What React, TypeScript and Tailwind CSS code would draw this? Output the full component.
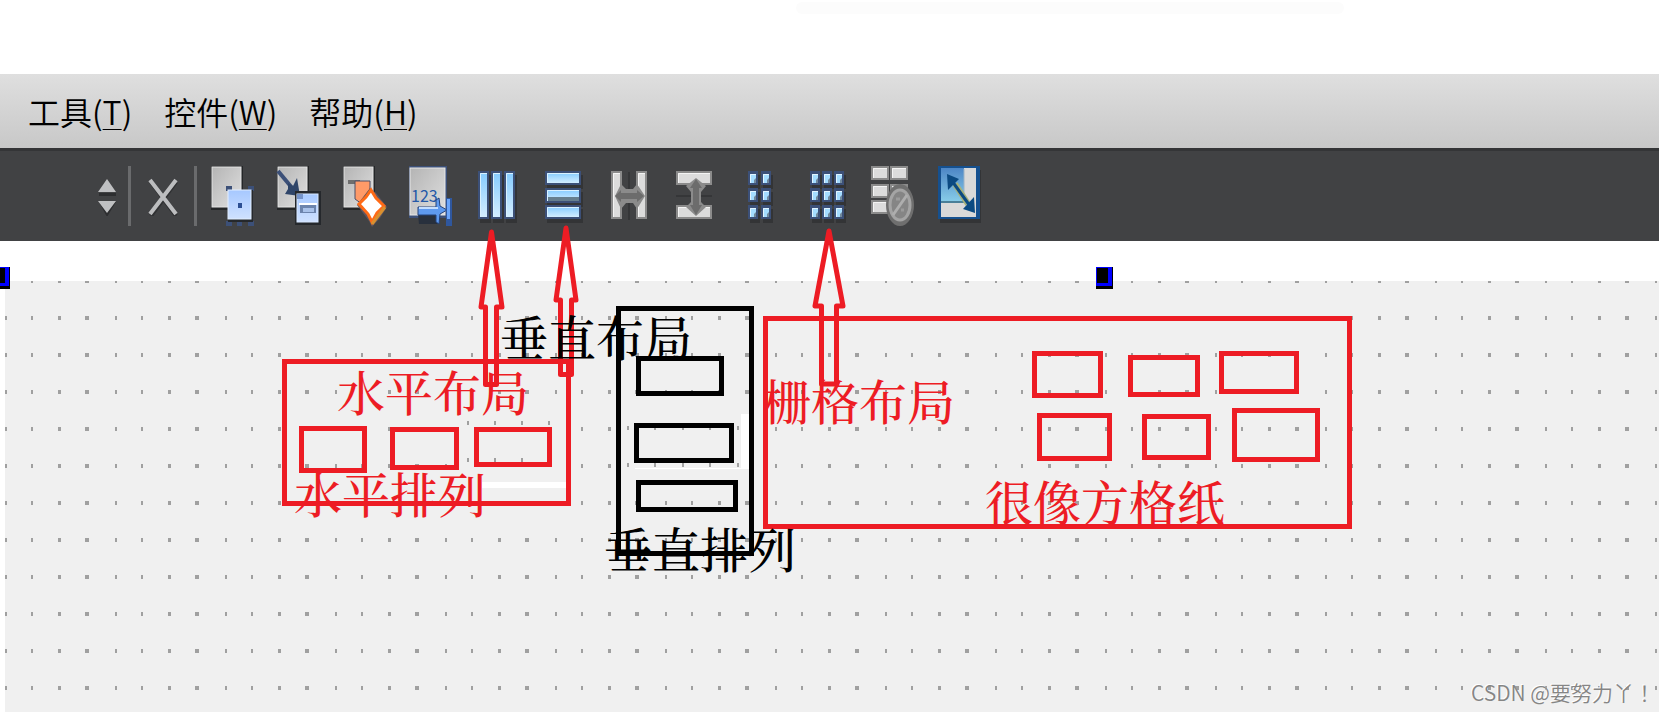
import type { ReactNode } from 'react'

type Box = { x: number; y: number; w: number; h: number; color: string }

const RED = '#ed1c24'
const BLACK = '#000000'
const NAVY = '#3c5078'

const boxes: Box[] = [
  { x: 282, y: 359, w: 289, h: 147, color: RED },
  { x: 299, y: 426, w: 68, h: 47, color: RED },
  { x: 390, y: 427, w: 69, h: 43, color: RED },
  { x: 474, y: 427, w: 78, h: 40, color: RED },
  { x: 763, y: 316, w: 589, h: 213, color: RED },
  { x: 1032, y: 351, w: 71, h: 47, color: RED },
  { x: 1128, y: 355, w: 72, h: 42, color: RED },
  { x: 1219, y: 351, w: 80, h: 43, color: RED },
  { x: 1037, y: 413, w: 75, h: 48, color: RED },
  { x: 1142, y: 414, w: 69, h: 46, color: RED },
  { x: 1232, y: 408, w: 88, h: 54, color: RED },
  { x: 616, y: 306, w: 138, h: 250, color: BLACK },
  { x: 636, y: 356, w: 88, h: 40, color: BLACK },
  { x: 634, y: 423, w: 100, h: 40, color: BLACK },
  { x: 636, y: 480, w: 102, h: 32, color: BLACK },
]

const arrows = [
  'M491.5 232 L481 307 H485.5 V384.5 H496.5 V307 H502 Z',
  'M566 228 L556 300 H560.5 V374.5 H571.5 V300 H576 Z',
  'M829 231 L815 306 H821.5 V384 H836.5 V306 H843 Z',
]

// dots of the pasted form fragments, which sit off the main grid
const strayDots = [
  [467, 421], [494, 421], [521, 421], [548, 421],
  [467, 458], [494, 458], [521, 458],
  [627, 426], [654, 426], [682, 426], [709, 426], [737, 426],
  [627, 463], [654, 463], [682, 463], [709, 463], [737, 463],
]

const menus = [
  { label: '工具', key: 'T' },
  { label: '控件', key: 'W' },
  { label: '帮助', key: 'H' },
]

function Icon({ children }: { children: ReactNode }) {
  return (
    <svg className="block h-16 w-12" viewBox="0 0 48 64" aria-hidden="true">
      {children}
    </svg>
  )
}

function Paper({ w = 32, h = 44 }: { w?: number; h?: number }) {
  return (
    <>
      <rect x="3" y="2" width={w} height={h} fill="#242628" />
      <rect x="4" y="3" width={w - 3} height={h - 4} fill="url(#paper)" stroke="#e4e4e4" />
    </>
  )
}

function Cell({ x, y, w, h }: { x: number; y: number; w: number; h: number }) {
  return (
    <>
      <rect x={x + 2} y={y + 4} width={w} height={h} fill="#333436" />
      <rect x={x} y={y} width={w} height={h} fill={NAVY} />
      <rect x={x + 2} y={y + 2} width={w - 4} height={h - 4} fill="url(#sky)" />
      <path d={`M${x + 2.5} ${y + h - 2} V${y + 2.5} H${x + w - 2}`} fill="none" stroke="#d9f1ff" />
    </>
  )
}

function SmallCell({ x, y }: { x: number; y: number }) {
  return (
    <>
      <rect x={x + 2} y={y + 4} width="10" height="14" fill="#333436" />
      <rect x={x} y={y} width="10" height="14" fill={NAVY} />
      <rect x={x + 2} y={y + 3} width="6" height="9" fill="#71899c" />
      <path d={`M${x + 2} ${y + 3} h6 v4 l-2 2 v3 h-4 z`} fill="#a4dcff" />
      <path d={`M${x + 2.5} ${y + 12} v-8.5 h5.5`} fill="none" stroke="#e2f4ff" />
    </>
  )
}

function GreyBar({ x, y, w, h }: { x: number; y: number; w: number; h: number }) {
  return (
    <>
      <rect x={x} y={y} width={w} height={h} fill="#8b8b8b" />
      <rect x={x + 2} y={y + 2} width={w - 4} height={h - 4} fill="#dcdcdc" />
      <path d={`M${x + 2.5} ${y + h - 2} V${y + 2.5} H${x + w - 2}`} fill="none" stroke="#f4f4f4" />
    </>
  )
}

const rows = [7, 24, 41]

const tools = [
  {
    name: '编辑控件',
    icon: (
      <Icon>
        <Paper />
        <path d="M18 22 h6 v5 h-6z M40 22 h6 v5 h-6z M18 57 h6 v5 h-6z M29 57 h5 v5 h-5z M40 57 h6 v5 h-6z" fill={NAVY} />
        <rect x="20" y="26" width="25" height="32" fill="#25282c" />
        <rect x="20" y="26" width="23" height="29" fill="url(#blue)" stroke="#e1eeff" />
        <rect x="30" y="39" width="4" height="5" fill="#2c4f93" />
      </Icon>
    ),
  },
  {
    name: '编辑信号/槽',
    icon: (
      <Icon>
        <Paper />
        <path d="M4 7 L19 25" stroke={NAVY} strokeWidth="4" />
        <path d="M11 30 L14 25 V19 L19 22 L23 14 L26 32 Z" fill="#2f4569" />
        <rect x="21" y="27" width="26" height="34" fill="#25282c" />
        <rect x="23" y="30" width="21" height="28" fill="url(#blue)" stroke="#d8e7ff" />
        <rect x="26" y="40" width="16" height="9" fill="#6c84ad" />
        <path d="M25 40 H43" stroke="#fff" strokeWidth="2" />
        <path d="M29 46 H40" stroke="#a9c2ea" strokeWidth="4" />
        <path d="M23 30 h6 v5 h-6z" fill="#7593c9" />
      </Icon>
    ),
  },
  {
    name: '编辑伙伴',
    icon: (
      <Icon>
        <Paper />
        <path d="M8 18 H20" stroke="#6e6e6e" strokeWidth="4" />
        <path d="M15 17 H30 V26 L22 40 L15 35 Z" fill="#ff9a68" stroke="#4c4f66" />
        <path d="M30 24 L36 29 L47 43 L40 54 L32 63 L29 57 L17 41 Z" fill="#5f5560" />
        <path d="M31 26 L36 34 L44 42 L37 49 L32 58 L28 50 L19 40 L26 33 Z" fill="#fff" stroke="#ff6a16" strokeWidth="3" />
        <path d="M45 43 L32 60" stroke="#d9902f" strokeWidth="3" />
      </Icon>
    ),
  },
  {
    name: '编辑 Tab 顺序',
    icon: (
      <Icon>
        <rect x="3" y="2" width="38" height="52" fill={NAVY} />
        <rect x="4" y="4" width="35" height="47" fill="url(#paper)" stroke="#e8e8e8" />
        <text x="5" y="38" fontSize="16" fill="#2559a8" fontFamily="Noto Sans CJK SC, sans-serif">
          123
        </text>
        <path d="M12 50 H32 V60 H13 Z" fill="#28303d" />
        <path d="M12 43 H30 V36 L33 34 L34 42 L41 46 L34 50 L33 60 L30 58 V51 H12 Z" fill="#5e9af0" stroke="#24427a" />
        <path d="M13 44 H32" stroke="#c4deff" strokeWidth="2" />
        <rect x="40" y="34" width="6" height="28" fill="#2f579e" />
        <rect x="41" y="35" width="3" height="20" fill="#6aa5fb" />
      </Icon>
    ),
  },
  {
    name: '水平布局',
    icon: (
      <Icon>
        {[6, 19, 32].map((x) => (
          <Cell key={x} x={x} y={7} w={11} h={48} />
        ))}
      </Icon>
    ),
  },
  {
    name: '垂直布局',
    icon: (
      <Icon>
        <Cell x={7} y={7} w={36} h={14} />
        <Cell x={7} y={24} w={36} h={15} />
        <Cell x={7} y={41} w={36} h={14} />
        <path d="M10 35 H41" stroke="#667f8e" strokeWidth="4" />
      </Icon>
    ),
  },
  {
    name: '使用分裂器水平布局',
    icon: (
      <Icon>
        <GreyBar x={7} y={7} w={11} h={48} />
        <GreyBar x={32} y={7} w={11} h={48} />
        <path d="M25 8 V56" stroke="#353638" strokeWidth="2" />
        <path d="M11 32 L17 20 L22 25 H29 L33 20 L41 32 L33 45 L29 39 H22 L17 45 Z" fill="#8b8b8b" />
        <path d="M11 32 L17 26 V29 H33 V26 L40 32 L33 38 V35 H17 V38 Z" fill="#6c6c6c" />
      </Icon>
    ),
  },
  {
    name: '使用分裂器垂直布局',
    icon: (
      <Icon>
        <GreyBar x={6} y={7} w={36} h={14} />
        <GreyBar x={6} y={41} w={36} h={14} />
        <path d="M6 32 H42" stroke="#353638" strokeWidth="2" />
        <path d="M26 14 L36 22 L31 28 V38 L36 43 L26 52 L16 43 L21 38 V28 L16 22 Z" fill="#8b8b8b" />
        <path d="M26 15 L32 24 H29 V41 H32 L26 51 L20 41 H23 V24 H20 Z" fill="#6c6c6c" />
      </Icon>
    ),
  },
  {
    name: '表单布局',
    icon: <Icon>{rows.flatMap((y) => [12, 25].map((x) => <SmallCell key={`${x}-${y}`} x={x} y={y} />))}</Icon>,
  },
  {
    name: '栅格布局',
    icon: <Icon>{rows.flatMap((y) => [8, 20, 32].map((x) => <SmallCell key={`${x}-${y}`} x={x} y={y} />))}</Icon>,
  },
  {
    name: '打破布局',
    icon: (
      <Icon>
        {[2, 20, 36].flatMap((y) => [3, 22].map((x) => <GreyBar key={`${x}-${y}`} x={x} y={y} w={18} h={14} />))}
        <ellipse cx="32" cy="41" rx="14" ry="21" fill="#6f6f6f" />
        <ellipse cx="32" cy="41" rx="10" ry="15" fill="#858585" stroke="#a4a4a4" strokeWidth="3" />
        <path d="M25 51 L39 31" stroke="#aeaeae" strokeWidth="3" />
        <path d="M28 35 H32 M33 46 H36" stroke="#9b9b9b" strokeWidth="3" />
      </Icon>
    ),
  },
  {
    name: '调整大小',
    icon: (
      <Icon>
        <rect x="6" y="6" width="41" height="53" fill="#333436" />
        <rect x="4" y="2" width="42" height="53" fill="#15508f" />
        <rect x="7" y="4" width="35" height="49" fill="#d9d9d9" />
        <path d="M7 4 H30 V37 H7 Z" fill="url(#deep)" />
        <path d="M7 38 H30" stroke="#4a7f98" strokeWidth="2" />
        <path d="M30 5 V37" stroke="#9db4c6" />
        <path d="M21 20 L34 40" stroke="#a6b27c" strokeWidth="6" />
        <path d="M18 17 L36 42" stroke="#0b4a82" strokeWidth="3" />
        <path d="M13 10 L25 15 L14 26 Z" fill="#0b4a82" />
        <path d="M41 49 L29 45 L40 33 Z" fill="#0b4a82" />
      </Icon>
    ),
  },
]

function Handle() {
  return (
    <div className="h-[22px] w-[17px] bg-black pr-px pb-[3px]">
      <div className="h-full bg-[#0000ff] pt-px pr-1 pb-[3px] pl-px">
        <div className="h-full bg-black" />
      </div>
    </div>
  )
}

function Note({ className, children }: { className: string; children: ReactNode }) {
  return (
    <span
      className={`absolute font-['Noto_Serif_CJK_SC','Noto_Sans_CJK_SC',serif] text-5xl leading-none whitespace-nowrap font-medium ${className}`}
    >
      {children}
    </span>
  )
}

export default function App() {
  return (
    <div className="relative flex min-h-screen flex-col overflow-hidden bg-white font-['Noto_Sans_CJK_SC',sans-serif]">
      <svg className="absolute size-0" aria-hidden="true">
        <defs>
          <linearGradient id="paper" x1="0" y1="0" x2="1" y2="1">
            <stop offset="0" stopColor="#b4b4b4" />
            <stop offset="1" stopColor="#e0e0e0" />
          </linearGradient>
          <linearGradient id="blue" x1="0" y1="0" x2="0" y2="1">
            <stop offset="0" stopColor="#a6c8ff" />
            <stop offset="1" stopColor="#cfe1ff" />
          </linearGradient>
          <linearGradient id="sky" x1="0" y1="0" x2="0" y2="1">
            <stop offset="0" stopColor="#86ccff" />
            <stop offset="1" stopColor="#d3edff" />
          </linearGradient>
          <linearGradient id="deep" x1="0" y1="0" x2="0" y2="1">
            <stop offset="0" stopColor="#4d86c6" />
            <stop offset="1" stopColor="#86cbe8" />
          </linearGradient>
        </defs>
      </svg>

      <div className="h-[74px] pt-0.5">
        <div className="ml-[48%] h-3 w-[33%] rounded-full bg-[#fcfcfc]" />
      </div>

      <nav className="flex h-[74px] items-center gap-8 bg-linear-to-b from-[#dfdfdf] to-[#c8c8c8] pl-7 text-black">
        {menus.map((m) => (
          <button key={m.key} type="button" className="text-[32px] font-[350] whitespace-nowrap">
            {m.label}(<span className="underline decoration-1 underline-offset-4">{m.key}</span>)
          </button>
        ))}
      </nav>

      <div className="flex h-[93px] items-center border-t-[3px] border-[#343537] bg-[#414244] pl-[91px]">
        <button type="button" aria-label="选择" className="w-8">
          <svg className="block h-10 w-8" viewBox="0 0 32 40" aria-hidden="true">
            <path d="M8 17 H25 V20 H8 Z M8 26 L16 41 L25 26 Z" fill="#2d2e30" />
            <path d="M16 3 L25 16 H7 Z M7 25 H25 L16 37 Z" fill="#bfc0c2" />
          </svg>
        </button>
        <div className="mx-[5px] h-[60px] w-[3px] bg-[#6a6b6d]" />
        <button type="button" aria-label="关闭" className="flex w-[53px] justify-center">
          <svg className="block h-10 w-8" viewBox="0 0 32 40" aria-hidden="true">
            <path d="M4 6 L29 40 M29 6 L4 40" stroke="#303133" strokeWidth="4" />
            <path d="M3 4 L29 38 M29 4 L3 38" stroke="#bcbdbf" strokeWidth="4" />
          </svg>
        </button>
        <div className="mx-[5px] h-[60px] w-[3px] bg-[#6a6b6d]" />
        <div className="ml-1.5 flex gap-[18px]">
          {tools.map((t) => (
            <button key={t.name} type="button" aria-label={t.name}>
              {t.icon}
            </button>
          ))}
        </div>
      </div>

      <main className="flex flex-1 flex-col pt-10 pl-[5px]">
        <div className="flex flex-1 bg-[#f0f0f0]">
          <svg className="w-full flex-1" aria-hidden="true">
            <defs>
              <pattern id="grid" width="110" height="37" y="-2" patternUnits="userSpaceOnUse">
                <path d="M0 0h2v4h-2z M26 0h2v4h-2z M53 0h3v4h-3z M80 0h4v4h-4z" fill="#a0a0a0" />
              </pattern>
            </defs>
            <rect width="100%" height="100%" fill="url(#grid)" />
          </svg>
        </div>
      </main>

      <div className="absolute top-[267px] -left-[7px]">
        <Handle />
      </div>
      <div className="absolute top-[267px] left-[1096px]">
        <Handle />
      </div>

      <svg className="pointer-events-none absolute inset-0 size-full" aria-hidden="true">
        <path d="M462 417 H566 V482 H462 Z M622 418 H741 V468 H622 Z" fill="#f0f0f0" />
        <path d="M482 482 H566 V488 H482 Z M741 414 H749 V469 H635 V468 H741 Z" fill="#fff" />
        {strayDots.map(([x, y]) => (
          <rect key={`${x}-${y}`} x={x} y={y} width="2" height="4" fill="#a0a0a0" />
        ))}
        {arrows.map((d) => (
          <path key={d} d={d} fill="none" stroke={RED} strokeWidth="5" strokeLinejoin="round" />
        ))}
        {boxes.map((b) => (
          <rect
            key={`${b.x}-${b.y}`}
            x={b.x + 2.5}
            y={b.y + 2.5}
            width={b.w - 5}
            height={b.h - 5}
            fill="none"
            stroke={b.color}
            strokeWidth="5"
          />
        ))}
      </svg>

      <Note className="top-[367px] left-[337px] text-[#ed1c24]">水平布局</Note>
      <Note className="top-[469px] left-[294px] text-[#ed1c24]">水平排列</Note>
      <Note className="top-[312px] left-[500px] text-black">垂直布局</Note>
      <Note className="top-[524px] left-[604px] text-black">垂直排列</Note>
      <Note className="top-[376px] left-[763px] text-[#ed1c24]">栅格布局</Note>
      <Note className="top-[477px] left-[985px] text-[#ed1c24]">很像方格纸</Note>

      <span className="absolute right-1 bottom-1 font-['Noto_Sans_CJK_TC',sans-serif] text-[21px] font-[350] whitespace-nowrap text-[#858585] [text-shadow:-1px_-1px_0_#fff]">
        CSDN @要努力丫！
      </span>
    </div>
  )
}
